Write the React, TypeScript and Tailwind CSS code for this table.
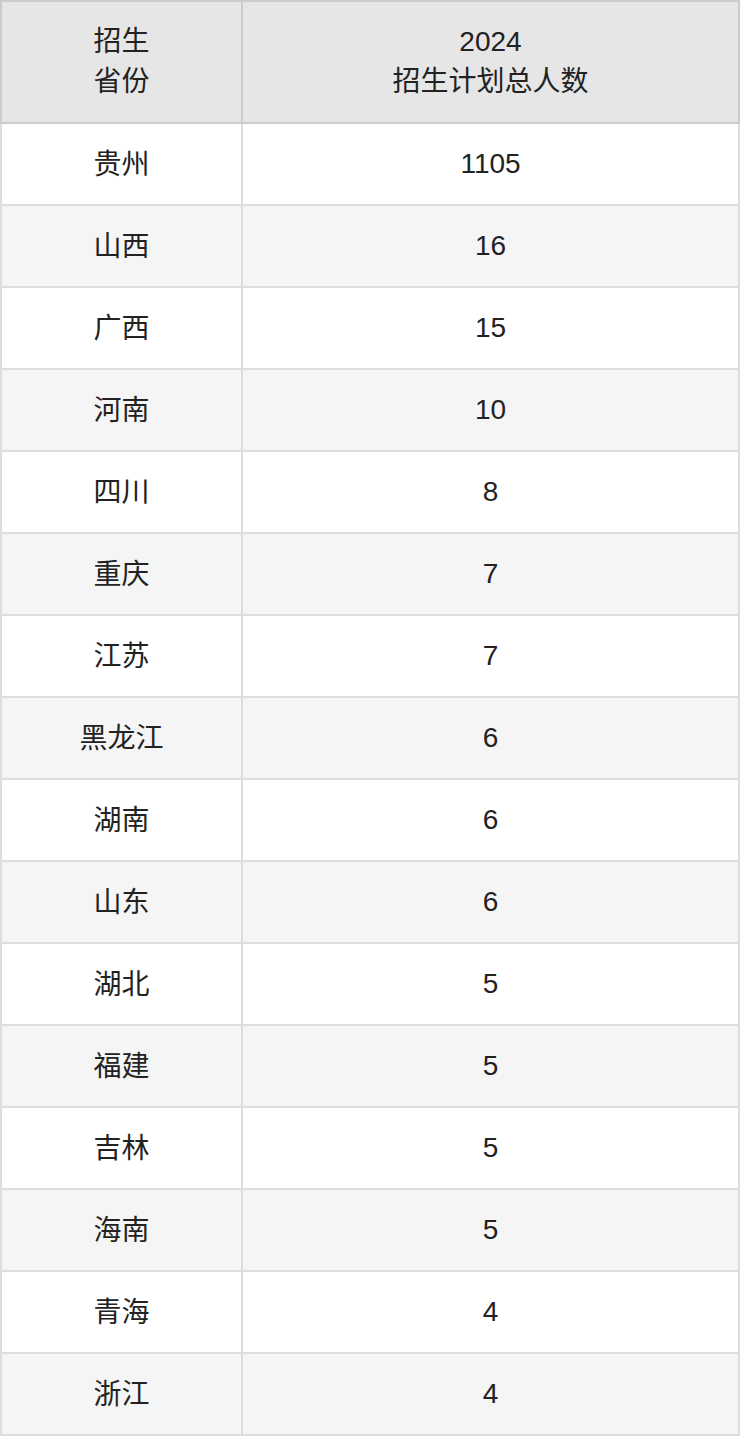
const rows: [string, string][] = [
  ["贵州", "1105"],
  ["山西", "16"],
  ["广西", "15"],
  ["河南", "10"],
  ["四川", "8"],
  ["重庆", "7"],
  ["江苏", "7"],
  ["黑龙江", "6"],
  ["湖南", "6"],
  ["山东", "6"],
  ["湖北", "5"],
  ["福建", "5"],
  ["吉林", "5"],
  ["海南", "5"],
  ["青海", "4"],
  ["浙江", "4"],
];

export default function App() {
  return (
    <div className="w-[740px] bg-white font-['Liberation_Sans','Noto_Sans_CJK_SC',sans-serif] text-[28px] leading-[40px] text-[#222]">
      {/* header */}
      <div className="flex h-[124px] border-2 border-[#cccccc] bg-[#e6e6e6]">
        <div className="flex w-[239px] flex-col items-center justify-center text-center">
          <span>招生</span>
          <span>省份</span>
        </div>
        <div className="flex flex-1 flex-col items-center justify-center border-l-2 border-[#cccccc] text-center">
          <span>2024</span>
          <span>招生计划总人数</span>
        </div>
      </div>

      {/* body */}
      {rows.map(([province, count], i) => (
        <div
          key={province}
          className={`flex h-[82px] border-x-2 border-b-2 border-[#dddddd] ${
            i % 2 === 1 ? "bg-[#f5f5f5]" : "bg-white"
          }`}
        >
          <div className="flex w-[239px] items-center justify-center pt-[2px]">{province}</div>
          <div className="flex flex-1 items-center justify-center border-l-2 border-[#dddddd]">
            {count}
          </div>
        </div>
      ))}
    </div>
  );
}
